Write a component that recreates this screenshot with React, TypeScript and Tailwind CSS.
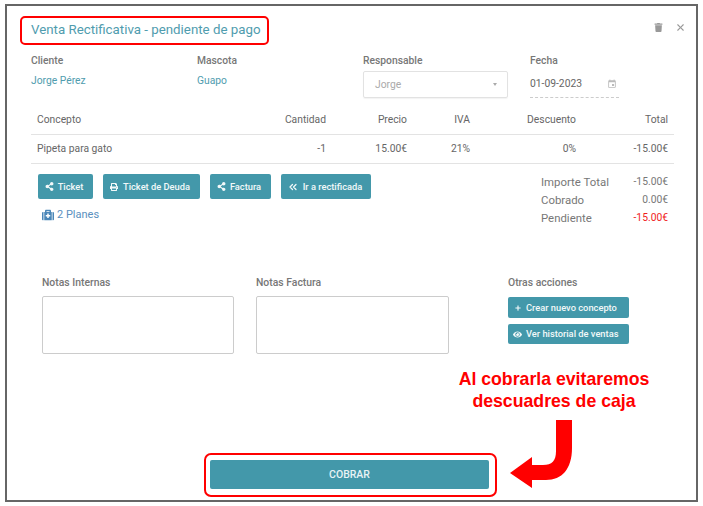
import { FaEye, FaMedkit, FaPlus, FaPrint, FaShareAlt, FaTrash } from 'react-icons/fa';
import { MdEvent } from 'react-icons/md';
import { HiX } from 'react-icons/hi';
import { ChevronsLeft } from 'lucide-react';
import { ReactNode } from 'react';

function ActionButton({ icon, label, className }: { icon: ReactNode; label: string; className: string }) {
  return (
    <button className={`${className} flex items-center rounded-[2px] bg-[#4398aa] text-[9.3px] font-medium text-[#f2f8f9]`}>
      {icon}
      {label}
    </button>
  );
}

function NoteBox({ label, w }: { label: string; w: string }) {
  return (
    <div className={w}>
      <div className="pt-px text-[10.4px] font-medium leading-[14px] text-[#777]">{label}</div>
      <textarea className="mt-[6px] block h-[58px] w-full resize-none rounded-[2px] border border-[#ccc] bg-white" />
    </div>
  );
}

const rowText = 'grid grid-cols-[230px_59px_81px_63px_106px_92px] items-center border-b border-[#e3e3e3] pl-[6px] text-[10.3px] text-[#666]';

export default function App() {
  return (
    <div className="relative h-[506px] w-[703px] overflow-hidden bg-white pl-[5px] pt-[4px]" style={{ fontFamily: 'Roboto, sans-serif' }}>
      <div className="h-[498px] w-[693px] border-2 border-[#666] bg-white">
        {/* header */}
        <div className="flex h-[44px] items-start justify-between pl-[24px] pr-[10px] pt-[15px]">
          <h1 className="text-[13.3px] leading-[18px] text-[#4f9cae]">Venta Rectificativa - pendiente de pago</h1>
          <div className="flex items-center gap-[12px] pt-[1px] text-[#999]">
            <FaTrash size={9} />
            <HiX size={11} />
          </div>
        </div>

        {/* cliente */}
        <div className="grid h-[56px] grid-cols-[166px_166px_167px_auto] pl-[24px] text-[10.3px]">
          <div className="pt-[4px]">
            <div className="font-medium leading-[14px] text-[#777]">Cliente</div>
            <div className="mt-[6px] leading-[14px] text-[#4f9cae]">Jorge Pérez</div>
          </div>
          <div className="pt-[4px]">
            <div className="font-medium leading-[14px] text-[#777]">Mascota</div>
            <div className="mt-[6px] leading-[14px] text-[#4f9cae]">Guapo</div>
          </div>
          <div className="pt-[4px]">
            <div className="font-medium leading-[14px] text-[#777]">Responsable</div>
            <div className="mt-[3px] flex h-[27px] w-[145px] items-center justify-between rounded-[2px] border border-[#e2e2e2] pl-[11px] pr-[10px] text-[#aaa] shadow-[0_1px_1px_rgba(0,0,0,0.05)]">
              Jorge
              <span className="h-0 w-0 border-x-[2.5px] border-t-[3px] border-x-transparent border-t-[#aaa]" />
            </div>
          </div>
          <div className="pt-[4px]">
            <div className="font-medium leading-[14px] text-[#777]">Fecha</div>
            <div className="mt-[3px] flex h-[27px] w-[89px] items-center justify-between border-b border-dashed border-[#ccc] pr-[2px] text-[#666]">
              01-09-2023
              <MdEvent size={10} className="text-[#bbb]" />
            </div>
          </div>
        </div>

        {/* tabla */}
        <div className="ml-[24px] w-[643px]">
          <div className={`${rowText} h-[29px] pb-[1px]`}>
            <div>Concepto</div>
            <div className="text-right">Cantidad</div>
            <div className="text-right">Precio</div>
            <div className="text-right">IVA</div>
            <div className="text-right">Descuento</div>
            <div className="text-right">Total</div>
          </div>
          <div className={`${rowText} h-[29px]`}>
            <div>Pipeta para gato</div>
            <div className="text-right">-1</div>
            <div className="text-right">15.00€</div>
            <div className="text-right">21%</div>
            <div className="text-right">0%</div>
            <div className="text-right">-15.00€</div>
          </div>
        </div>

        {/* acciones y totales */}
        <div className="flex h-[111px] justify-between pl-[31px] pr-[28px] pt-[10px]">
          <div>
            <div className="flex gap-[10px]">
              <ActionButton icon={<FaShareAlt size={9} />} label="Ticket" className="h-[25px] w-[55px] justify-center gap-[4px] pr-[3px]" />
              <ActionButton icon={<FaPrint size={8} />} label="Ticket de Deuda" className="h-[25px] w-[97px] justify-center gap-[5px] pr-[3px]" />
              <ActionButton icon={<FaShareAlt size={9} />} label="Factura" className="h-[25px] w-[61px] justify-center gap-[4px] pr-[3px]" />
              <ActionButton icon={<ChevronsLeft size={12} strokeWidth={2.5} />} label="Ir a rectificada" className="h-[25px] w-[90px] justify-center gap-[4px] pr-[3px]" />
            </div>
            <div className="ml-[4px] mt-[9px] flex items-center gap-[3px] text-[11px] leading-[14px] text-[#5a8fbe]">
              <FaMedkit size={12} className="text-[#4a86b8]" />
              2 Planes
            </div>
          </div>
          <div className="-mt-px grid w-[127px] grid-cols-[auto_auto] content-start justify-between text-[11.4px] leading-[18px] text-[#777]">
            <div>Importe Total</div>
            <div className="text-right text-[10.3px]">-15.00€</div>
            <div>Cobrado</div>
            <div className="text-right text-[10.3px]">0.00€</div>
            <div>Pendiente</div>
            <div className="text-right text-[10.3px] text-[#f01c1c]">-15.00€</div>
          </div>
        </div>

        {/* notas */}
        <div className="flex h-[185px] pl-[35px]">
          <NoteBox label="Notas Internas" w="w-[192px]" />
          <div className="w-[22px]" />
          <NoteBox label="Notas Factura" w="w-[193px]" />
          <div className="ml-[59px] w-[121px]">
            <div className="pt-px text-[10.4px] font-medium leading-[14px] text-[#777]">Otras acciones</div>
            <div className="mt-[7px] flex flex-col gap-[6px]">
              <ActionButton icon={<FaPlus size={6} className="ml-[2px] mr-[5px]" />} label="Crear nuevo concepto" className="h-[21px] w-[121px] justify-start pl-[5px]" />
              <ActionButton icon={<FaEye size={9} className="mr-[4px]" />} label="Ver historial de ventas" className="h-[20px] w-[121px] justify-start pl-[5px]" />
            </div>
          </div>
        </div>

        {/* cobrar */}
        <div className="pl-[203px]">
          <button className="h-[29px] w-[279px] rounded-[2px] bg-[#4398aa] text-[10.5px] font-medium text-[#e8f3f5]">COBRAR</button>
        </div>
      </div>

      {/* anotaciones */}
      <div className="absolute left-[20px] top-[16px] h-[29px] w-[249px] rounded-[5px] border-2 border-[#f00]" />
      <div className="absolute left-[204px] top-[453px] h-[44px] w-[293px] rounded-[7px] border-2 border-[#f00]" />
      <div className="absolute left-[440px] top-[368px] w-[228px] text-center text-[17.7px] font-bold leading-[22px] text-[#f00]" style={{ fontFamily: '"Liberation Sans", sans-serif' }}>
        Al cobrarla evitaremos
        <br />
        descuadres de caja
      </div>
      <svg className="absolute left-[510px] top-[420px]" width="64" height="70" viewBox="0 0 64 70">
        <path d="M46 0H62V28C62 49 52 60 36 60H22V68L0 53 22 37V45H33C42 45 46 41 46 31Z" fill="#f00" />
      </svg>
    </div>
  );
}
